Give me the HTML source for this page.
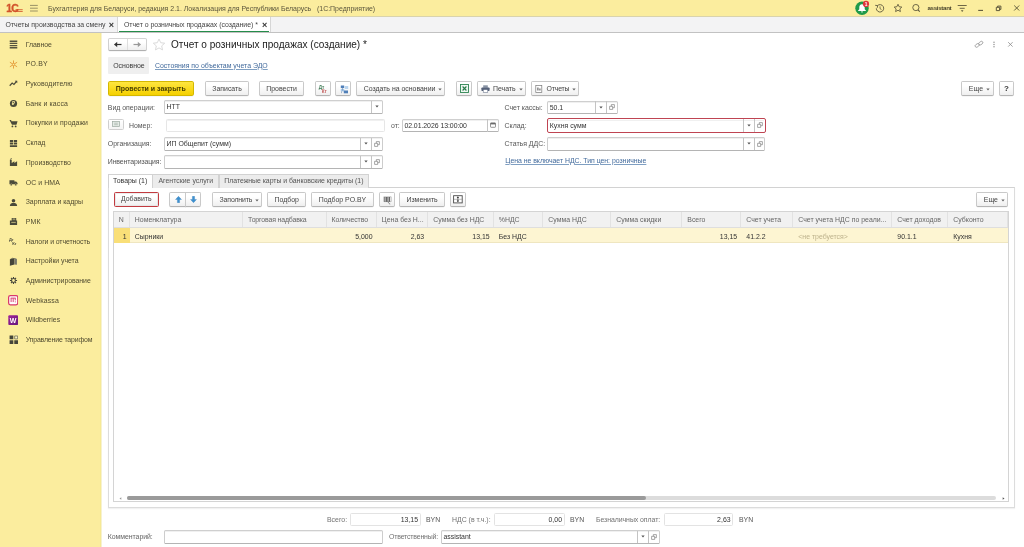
<!DOCTYPE html><html><head><meta charset="utf-8"><title>1C</title><style>
*{box-sizing:border-box;margin:0;padding:0}
html,body{width:1024px;height:547px;overflow:hidden;background:#fff}
body{will-change:transform;font-family:"Liberation Sans",sans-serif;font-size:6.93px;color:#333;position:relative;line-height:1}
.a{position:absolute;white-space:nowrap}
.t{position:absolute;white-space:nowrap;line-height:10px;height:10px;color:#555}
.btn{position:absolute;border:1px solid #c9c9c9;border-bottom-color:#b4b4b4;border-radius:1.800px;background:linear-gradient(#fff 30%,#efefef);box-shadow:0 0.500px 0.500px rgba(0,0,0,.07);text-align:center;color:#444;white-space:nowrap}
.inp{position:absolute;border:1px solid #b9b9b9;border-radius:1px;background:#fff;color:#333;white-space:nowrap;overflow:hidden}
.lnk{position:absolute;color:#426a9c !important;text-decoration:underline;text-decoration-color:#7f9fc2;text-decoration-thickness:0.600px;text-underline-offset:0.500px;white-space:nowrap}
.th{position:absolute;top:0;border-right:1px solid #e2e2e2;color:#666;padding-left:4.800px;overflow:hidden;white-space:nowrap}
.td{position:absolute;top:0;color:#333;padding:0 4.300px 0 4.800px;overflow:hidden;white-space:nowrap}
.r{text-align:right}
</style></head><body>
<div class="a" style="left:0px;top:0px;width:1024px;height:16px;background:#fbed9e"></div>
<svg class="a" style="left:6px;top:3px" width="18" height="10" viewBox="0 0 18 10"><text x="0.300" y="8.800" font-family="Liberation Sans,sans-serif" font-weight="bold" font-size="10.400" fill="#d2542c" stroke="#d2542c" stroke-width="0.350" letter-spacing="-0.800">1С</text><rect x="8.500" y="7.900" width="8.200" height="0.900" fill="#d2542c"/><rect x="9.500" y="6.300" width="7.200" height="0.800" fill="#d2542c"/></svg>
<svg class="a" style="left:29px;top:4px" width="10" height="9" viewBox="0 0 10 9"><g stroke="#9a9266" stroke-width="1"><path d="M1 1.400h7.800M1 4.200h7.800M1 7h7.800"/></g></svg>
<div class="t" style="left:48px;top:3.5px;color:#5a553c;font-size:6.95px">Бухгалтерия для Беларуси, редакция 2.1. Локализация для Республики Беларусь &nbsp;&nbsp;(1С:Предприятие)</div>
<svg class="a" style="left:852px;top:0px" width="20" height="16" viewBox="0 0 20 16"><circle cx="10" cy="8.300" r="6.700" fill="#1f9a4a"/><path d="M10 4.200c-1.900 0-2.700 1.400-2.700 3.100v1.900l-1.200 1.300v0.500h7.800v-0.500l-1.200-1.300v-1.900c0-1.700-0.800-3.100-2.700-3.100z" fill="#fff"/><path d="M9 11.500h2a1 1 0 0 1-2 0z" fill="#fff"/><circle cx="14" cy="3.900" r="3.100" fill="#e0353a"/><text x="14" y="5.700" font-size="4.800" text-anchor="middle" fill="#fff" font-family="Liberation Sans,sans-serif" font-weight="bold">1</text></svg>
<svg class="a" style="left:874px;top:2.800px" width="12" height="11" viewBox="0 0 12 11"><path d="M2.300 5.300a3.700 3.700 0 1 0 1.100-2.600" fill="none" stroke="#5e583c" stroke-width="0.900"/><path d="M1.200 2.300l2.400.3-.3 2.200" fill="none" stroke="#5e583c" stroke-width="0.900"/><path d="M6 3.400v2.200l1.500 1" fill="none" stroke="#5e583c" stroke-width="0.800"/></svg>
<svg class="a" style="left:893px;top:3px" width="10" height="10" viewBox="0 0 12 11"><path d="M6 1l1.400 3 3.200.4-2.400 2.200.7 3.200L6 8.200 3.100 9.800l.7-3.200L1.400 4.400l3.200-.4z" fill="none" stroke="#5e583c" stroke-width="1.050" stroke-linejoin="round"/></svg>
<svg class="a" style="left:911px;top:3.200px" width="11" height="10" viewBox="0 0 12 11"><circle cx="5.300" cy="5" r="3.400" fill="none" stroke="#5e583c" stroke-width="1"/><path d="M7.600 7.600l2 2" stroke="#5e583c" stroke-width="1.200"/></svg>
<div class="t" style="left:927.5px;top:3.4px;letter-spacing:-0.331px;color:#4a452c;font-size:6.200px;font-weight:bold">assistant</div>
<svg class="a" style="left:957px;top:4px" width="10" height="9" viewBox="0 0 10 9"><g stroke="#5e583c" stroke-width="0.900"><path d="M0.700 1.500h9M2.700 4.300h5"/></g><path d="M3.900 6.300h2.600l-1.300 1.600z" fill="#5e583c"/></svg>
<svg class="a" style="left:976px;top:4px" width="10" height="9" viewBox="0 0 10 9"><path d="M2.200 6.400h4.800" stroke="#5e583c" stroke-width="1.100"/></svg>
<svg class="a" style="left:994px;top:4px" width="10" height="9" viewBox="0 0 10 9"><path d="M2.300 3.300h3.300v3.300h-3.300zM3.600 3.300v-1.200h3.300v3.300h-1.300" fill="none" stroke="#5e583c" stroke-width="1"/></svg>
<svg class="a" style="left:1011px;top:4px" width="10" height="9" viewBox="0 0 10 9"><path d="M3.200 1.500l5 5M8.200 1.500l-5 5" stroke="#5e583c" stroke-width="0.950"/></svg>
<div class="a" style="left:0px;top:16px;width:1024px;height:17.3px;background:#f3f3f4;border-top:1px solid #d9d3ad;border-bottom:1px solid #c2c2c2"></div>
<div class="t" style="left:5.5px;top:20.1px;color:#444">Отчеты производства за смену</div>
<div class="t" style="left:108.7px;top:20px;color:#333;font-size:9px;font-weight:bold">×</div>
<div class="a" style="left:117px;top:17px;width:154px;height:15.3px;background:#fff;border-left:1px solid #d6d6d6;border-right:1px solid #d6d6d6"></div>
<div class="a" style="left:119.3px;top:30.8px;width:149.4px;height:1.3px;background:#258c4a"></div>
<div class="t" style="left:124px;top:20.1px;letter-spacing:-0.029px;color:#444">Отчет о розничных продажах (создание) *</div>
<div class="t" style="left:261.9px;top:20px;color:#333;font-size:9px;font-weight:bold">×</div>
<div class="a" style="left:0px;top:33px;width:101px;height:514px;background:#fbed9e"></div>
<div class="a" style="left:100px;top:33px;width:1px;height:514px;background:#f6e996"></div>
<div class="a" style="left:101px;top:33px;width:1px;height:514px;background:#f7f2cf"></div>
<svg class="a" style="left:8.8px;top:40.1px" width="9" height="9" viewBox="0 0 10 10"><path d="M0.800 1.400h8.400M0.800 3.800h8.400M0.800 6.200h8.400M0.800 8.600h8.400" stroke="#55533f" stroke-width="1.500"/></svg>
<div class="t" style="left:25.7px;top:39.7px;letter-spacing:-0.040px;color:#504b30">Главное</div>
<svg class="a" style="left:8.8px;top:59.79px" width="9" height="9" viewBox="0 0 10 10"><g stroke="#e0902a" stroke-width="0.9"><path d="M5 0.500v9M1 2.500l8 5M9 2.500l-8 5"/></g><circle cx="5" cy="5" r="1.300" fill="#fbed9e" stroke="#e0902a" stroke-width="0.700"/></svg>
<div class="t" style="left:25.7px;top:59.39px;letter-spacing:0.203px;color:#504b30">PO.BY</div>
<svg class="a" style="left:8.8px;top:79.48px" width="9" height="9" viewBox="0 0 10 10"><path d="M0.800 7.500l2.700-3 2 1.500 3-3.500" fill="none" stroke="#4a4a3a" stroke-width="1.300"/><path d="M6.500 2h2.700v2.700z" fill="#4a4a3a"/></svg>
<div class="t" style="left:25.7px;top:79.08px;letter-spacing:0.047px;color:#504b30">Руководителю</div>
<svg class="a" style="left:8.8px;top:99.17px" width="9" height="9" viewBox="0 0 10 10"><circle cx="5" cy="5" r="4" fill="#4a4a3a"/><text x="5" y="7.200" font-size="6" font-weight="bold" text-anchor="middle" fill="#fbed9e" font-family="Liberation Sans,sans-serif">₽</text></svg>
<div class="t" style="left:25.7px;top:98.77px;letter-spacing:0.125px;color:#504b30">Банк и касса</div>
<svg class="a" style="left:8.8px;top:118.86px" width="9" height="9" viewBox="0 0 10 10"><path d="M0.500 1h1.800l.5 1.500h6.700l-1.200 4h-5z" fill="#4a4a3a"/><circle cx="3.800" cy="8.300" r="1" fill="#4a4a3a"/><circle cx="7.400" cy="8.300" r="1" fill="#4a4a3a"/></svg>
<div class="t" style="left:25.7px;top:118.46px;letter-spacing:0.053px;color:#504b30">Покупки и продажи</div>
<svg class="a" style="left:8.8px;top:138.55px" width="9" height="9" viewBox="0 0 10 10"><path d="M1 1h3.600v2.200h-3.600zM5.400 1h3.600v2.200h-3.600zM1 4h3.600v2.200h-3.600zM5.400 4h3.600v2.200h-3.600zM1 7h8v2h-8z" fill="#4a4a3a"/></svg>
<div class="t" style="left:25.7px;top:138.15px;letter-spacing:-0.111px;color:#504b30">Склад</div>
<svg class="a" style="left:8.8px;top:158.24px" width="9" height="9" viewBox="0 0 10 10"><path d="M1 9v-7h2v3.500l3-2v2l3-2v5.500z" fill="#4a4a3a"/><path d="M1.200 1.500l2-1" stroke="#4a4a3a" stroke-width="0.800"/></svg>
<div class="t" style="left:25.7px;top:157.84px;letter-spacing:0.010px;color:#504b30">Производство</div>
<svg class="a" style="left:8.8px;top:177.93px" width="9" height="9" viewBox="0 0 10 10"><path d="M0.500 2.500h5.500v4.500h-5.500zM6 4h2l1.500 1.500v1.500h-3.500z" fill="#4a4a3a"/><circle cx="2.500" cy="7.500" r="1.100" fill="#4a4a3a" stroke="#fbed9e" stroke-width="0.400"/><circle cx="7.500" cy="7.500" r="1.100" fill="#4a4a3a" stroke="#fbed9e" stroke-width="0.400"/></svg>
<div class="t" style="left:25.7px;top:177.53px;letter-spacing:0.085px;color:#504b30">ОС и НМА</div>
<svg class="a" style="left:8.8px;top:197.62px" width="9" height="9" viewBox="0 0 10 10"><circle cx="5" cy="3" r="2" fill="#4a4a3a"/><path d="M1 9c0-3 2-3.500 4-3.500s4 .5 4 3.500z" fill="#4a4a3a"/></svg>
<div class="t" style="left:25.7px;top:197.22px;letter-spacing:-0.043px;color:#504b30">Зарплата и кадры</div>
<svg class="a" style="left:8.8px;top:217.31px" width="9" height="9" viewBox="0 0 10 10"><path d="M1 4h8v5h-8zM3 1h5v3h-5z" fill="#4a4a3a"/><path d="M4 2h3M4 3h3" stroke="#fbed9e" stroke-width="0.500"/><path d="M2.500 6h5" stroke="#fbed9e" stroke-width="0.700"/></svg>
<div class="t" style="left:25.7px;top:216.91px;letter-spacing:0.249px;color:#504b30">РМК</div>
<svg class="a" style="left:8.8px;top:237px" width="9" height="9" viewBox="0 0 10 10"><text x="0" y="4.500" font-size="4.500" font-weight="bold" fill="#4a4a3a" font-family="Liberation Sans,sans-serif">Дт</text><text x="3.500" y="9" font-size="4.500" font-weight="bold" fill="#4a4a3a" font-family="Liberation Sans,sans-serif">Кт</text></svg>
<div class="t" style="left:25.7px;top:236.6px;letter-spacing:-0.093px;color:#504b30">Налоги и отчетность</div>
<svg class="a" style="left:8.8px;top:256.69px" width="9" height="9" viewBox="0 0 10 10"><path d="M1 2.600l5-1.400v7.200l-5 1.300z" fill="#45453a"/><path d="M6 1.200l2.800 0.900v6.600l-2.800-0.300z" fill="#77776a"/><path d="M1 2.600l2.800-1.800 5 1.300-2.800-0.900z" fill="#5e5e50"/></svg>
<div class="t" style="left:25.7px;top:256.29px;letter-spacing:-0.050px;color:#504b30">Настройки учета</div>
<svg class="a" style="left:8.8px;top:276.38px" width="9" height="9" viewBox="0 0 10 10"><g transform="translate(5 5) scale(0.94) translate(-5 -5)"><circle cx="5" cy="5" r="2.300" fill="none" stroke="#45453a" stroke-width="1.300"/><g stroke="#45453a" stroke-width="1.300"><path d="M5 0.800v1.600M5 7.600v1.600M0.800 5h1.600M7.600 5h1.600M2 2l1.200 1.200M6.800 6.800l1.200 1.200M8 2l-1.200 1.200M3.200 6.800l-1.200 1.200"/></g></g></svg>
<div class="t" style="left:25.7px;top:275.98px;letter-spacing:-0.058px;color:#504b30">Администрирование</div>
<svg class="a" style="left:8.1px;top:295.37px" width="10.4" height="10.4" viewBox="0 0 10 10"><rect x="0.600" y="0.600" width="8.800" height="8.800" rx="1.600" fill="#fff" stroke="#d8396b" stroke-width="1.200"/><path d="M2.600 3h4.800" stroke="#d8396b" stroke-width="0.900"/><path d="M3 3v3.800M5 3v3.800M7 3v2.200" stroke="#d8396b" stroke-width="0.900"/><circle cx="7" cy="6.600" r="0.500" fill="#d8396b"/></svg>
<div class="t" style="left:25.7px;top:295.67px;letter-spacing:0.122px;color:#504b30">Webkassa</div>
<svg class="a" style="left:8.1px;top:315.06px" width="10.4" height="10.4" viewBox="0 0 10 10"><defs><linearGradient id="wbg" x1="0" y1="0" x2="1" y2="1"><stop offset="0" stop-color="#a0219a"/><stop offset="1" stop-color="#64187c"/></linearGradient></defs><rect x="0.300" y="0.300" width="9.400" height="9.400" rx="1" fill="url(#wbg)"/><text x="5" y="7.500" font-size="6.800" font-weight="bold" text-anchor="middle" fill="#fff" font-family="Liberation Sans,sans-serif">W</text></svg>
<div class="t" style="left:25.7px;top:315.36px;letter-spacing:-0.014px;color:#504b30">Wildberries</div>
<svg class="a" style="left:8.5px;top:335.15px" width="9.6" height="9.6" viewBox="0 0 10 10"><path d="M0.600 0.600h3.900v3.900h-3.900zM5.500 5.500h3.900v3.900h-3.900zM0.600 5.500h3.900v3.900h-3.900z" fill="#45453a"/><path d="M5.900 1h3.100v3.100h-3.100z" fill="#fbf3c4" stroke="#6a6a58" stroke-width="0.800"/></svg>
<div class="t" style="left:25.7px;top:335.05px;letter-spacing:-0.153px;color:#504b30">Управление тарифом</div>
<div class="btn" style="left:108px;top:38px;width:39px;height:13px;border-color:#d4d4d4 #d0d0d0 #b0b0b0 #d0d0d0"></div>
<div class="a" style="left:127px;top:39px;width:1px;height:11px;background:#dedede"></div>
<svg class="a" style="left:113px;top:41px" width="10" height="7" viewBox="0 0 10 7"><path d="M1.500 3.500h7" stroke="#333" stroke-width="1.200"/><path d="M4.200 0.800l-3 2.700 3 2.700z" fill="#333"/></svg>
<svg class="a" style="left:132px;top:41px" width="10" height="7" viewBox="0 0 10 7"><path d="M1.500 3.500h7" stroke="#999" stroke-width="1.200"/><path d="M5.800 0.800l3 2.700-3 2.700z" fill="#999"/></svg>
<svg class="a" style="left:152px;top:38px" width="14" height="13" viewBox="0 0 14 13"><path d="M7 1l1.700 3.700 4 .5-3 2.700.8 4L7 9.900 3.500 11.900l.8-4-3-2.700 4-.5z" fill="none" stroke="#d6d6d6" stroke-width="0.9" stroke-linejoin="round"/></svg>
<div class="t" style="left:171px;top:40px;color:#222;font-size:10.05px;line-height:12px;height:12px;margin-top:-1px">Отчет о розничных продажах (создание) *</div>
<svg class="a" style="left:973.500px;top:39.500px" width="10" height="9" viewBox="0 0 11 10"><g fill="none" stroke="#999" stroke-width="0.900"><rect x="1" y="4.500" width="5" height="3" rx="1.500" transform="rotate(-35 3.500 6)"/><rect x="5" y="2" width="5" height="3" rx="1.500" transform="rotate(-35 7.500 3.500)"/></g></svg>
<svg class="a" style="left:992.200px;top:40.500px" width="4" height="7" viewBox="0 0 4 7"><g fill="#8a8a8a"><circle cx="2" cy="1.200" r="0.700"/><circle cx="2" cy="3.500" r="0.700"/><circle cx="2" cy="5.800" r="0.700"/></g></svg>
<svg class="a" style="left:1007px;top:40.500px" width="7" height="7" viewBox="0 0 7 7"><path d="M1.200 1.200l4.400 4.400M5.600 1.200l-4.400 4.400" stroke="#8a8a8a" stroke-width="0.800"/></svg>
<div class="a" style="left:108px;top:57.2px;width:40.8px;height:16.6px;background:#efefef;border-radius:1px"></div>
<div class="t" style="left:113.2px;top:60.7px;letter-spacing:-0.032px;color:#3a3a3a">Основное</div>
<div class="lnk t" style="left:155px;top:60.5px;font-size:6.93px">Состояния по объектам учета ЭДО</div>
<div class="btn" style="left:108px;top:81.2px;width:85.5px;height:14.8px;line-height:14.2px;background:linear-gradient(#ffe640,#f5d000);border-color:#d4b800;color:#4a4000;font-size:7px"><b>Провести и закрыть</b></div>
<div class="btn" style="left:204.8px;top:81.2px;width:44.5px;height:14.8px;line-height:14.2px;">Записать</div>
<div class="btn" style="left:259.3px;top:81.2px;width:44.6px;height:14.8px;line-height:14.2px;">Провести</div>
<div class="btn" style="left:315px;top:81.2px;width:15.8px;height:14.8px;line-height:14.2px;"><span style="font-size:4.600px;font-weight:bold;position:absolute;left:2.800px;top:2.400px;color:#3f7a55;line-height:5px">Дт</span><span style="font-size:4.600px;font-weight:bold;position:absolute;left:5.800px;top:6.800px;color:#c35c5c;line-height:5px">Кт</span></div>
<div class="btn" style="left:335.1px;top:81.2px;width:16.2px;height:14.8px;line-height:14.2px;"><svg style="position:absolute;left:3.500px;top:2.500px" width="9" height="9" viewBox="0 0 9 9"><rect x="0.800" y="0.500" width="3.400" height="2.600" fill="#4f7fb8"/><rect x="4.800" y="1" width="3.400" height="3" fill="#b9d4ee"/><rect x="0.800" y="4" width="3.400" height="2.400" fill="#a6c8e8"/><rect x="3.800" y="5.500" width="4.200" height="2.800" fill="#4f7fb8"/><path d="M2.500 3v2.500M1.500 6.400v1.800" stroke="#6c8cb0" stroke-width="0.600"/></svg></div>
<div class="btn" style="left:355.8px;top:81.2px;width:89.6px;height:14.8px;line-height:14.2px;text-align:left"><span style="position:absolute;left:6.95px;top:0;letter-spacing:-0.010px">Создать на основании</span><svg style="position:absolute;left:81.4px;top:5.9px" width="4" height="3" viewBox="0 0 4 3"><path d="M0.300 0.400h3.400l-1.700 2.200z" fill="#666"/></svg></div>
<div class="btn" style="left:456.4px;top:81.2px;width:15.4px;height:14.8px;line-height:14.2px;"><svg style="position:absolute;left:2.500px;top:2px" width="9" height="9" viewBox="0 0 9 9"><rect x="0.500" y="0.500" width="8" height="8" fill="#eef7f1" stroke="#2e8552" stroke-width="0.900"/><path d="M2.600 2.500l3.800 4M6.400 2.500l-3.800 4" stroke="#2a7a4a" stroke-width="1.100"/></svg></div>
<div class="btn" style="left:477px;top:81.2px;width:48.5px;height:14.8px;line-height:14.2px;text-align:left"><svg style="position:absolute;left:3px;top:2.800px" width="9" height="8" viewBox="0 0 9 8"><rect x="2.200" y="0.300" width="4.600" height="2.500" fill="#8a95a5"/><rect x="0.400" y="2.400" width="8.200" height="3.600" rx="0.800" fill="#56627a"/><rect x="2.200" y="4.600" width="4.600" height="3" fill="#fff" stroke="#56627a" stroke-width="0.500"/></svg><span style="position:absolute;left:15.1px;top:0;letter-spacing:-0.050px">Печать</span><svg style="position:absolute;left:40.5px;top:5.9px" width="4" height="3" viewBox="0 0 4 3"><path d="M0.300 0.400h3.400l-1.700 2.200z" fill="#666"/></svg></div>
<div class="btn" style="left:530.6px;top:81.2px;width:48.8px;height:14.8px;line-height:14.2px;text-align:left"><svg style="position:absolute;left:3.700px;top:2.800px" width="8" height="8" viewBox="0 0 8 8"><rect x="0.800" y="0.500" width="6" height="7" fill="#fff" stroke="#777" stroke-width="0.700"/><path d="M2.300 2.500h1.200v3h-1.200zM4.300 3.500h1.200v2h-1.200z" fill="#666"/></svg><span style="position:absolute;left:15px;top:0;letter-spacing:-0.192px">Отчеты</span><svg style="position:absolute;left:40.3px;top:5.9px" width="4" height="3" viewBox="0 0 4 3"><path d="M0.300 0.400h3.400l-1.700 2.200z" fill="#666"/></svg></div>
<div class="btn" style="left:961.2px;top:81.2px;width:32.4px;height:14.8px;line-height:14.2px;text-align:left"><span style="position:absolute;left:6.6px;top:0;letter-spacing:0.100px">Еще</span><svg style="position:absolute;left:23.9px;top:5.9px" width="4" height="3" viewBox="0 0 4 3"><path d="M0.300 0.400h3.400l-1.700 2.200z" fill="#666"/></svg></div>
<div class="btn" style="left:998.5px;top:81.2px;width:15.8px;height:14.8px;line-height:14.2px;"><b style="font-size:8px;color:#333">?</b></div>
<div class="t" style="left:107.8px;top:102.7px;">Вид операции:</div>
<div class="a" style="left:164.2px;top:100.4px;width:218.6px;height:13.3px;border:1px solid #c4c4c4;border-color:#cfcfcf #cdcdcd #b4b4b4 #cdcdcd;border-radius:1.500px;background:#fff;box-shadow:inset 0 1px 0 #f0f0f0;"></div>
<div class="a" style="left:371.1px;top:100.9px;width:1px;height:12.3px;background:#c4c4c4"></div>
<svg class="a" style="left:375px;top:105.25px" width="4" height="3" viewBox="0 0 4 3"><path d="M0.300 0.400h3.400l-1.700 2.200z" fill="#555"/></svg>
<div class="t" style="left:166.6px;top:102.15px;color:#333;">НТТ</div>
<div class="t" style="left:504.6px;top:102.9px;">Счет кассы:</div>
<div class="a" style="left:547.3px;top:100.9px;width:70.5px;height:13px;border:1px solid #c4c4c4;border-color:#cfcfcf #cdcdcd #b4b4b4 #cdcdcd;border-radius:1.500px;background:#fff;box-shadow:inset 0 1px 0 #f0f0f0;"></div>
<div class="a" style="left:594.5px;top:101.4px;width:1px;height:12px;background:#c4c4c4"></div>
<div class="a" style="left:606.2px;top:101.4px;width:1px;height:12px;background:#c4c4c4"></div>
<svg class="a" style="left:598.65px;top:105.6px" width="4" height="3" viewBox="0 0 4 3"><path d="M0.300 0.400h3.400l-1.700 2.200z" fill="#555"/></svg>
<svg class="a" style="left:609.25px;top:104.2px" width="6" height="6" viewBox="0 0 7 7"><path d="M2.700 0.700h3.600v3.600h-3.600z" fill="none" stroke="#777" stroke-width="0.750"/><path d="M0.700 2.700h3.600v3.600h-3.600z" fill="#fff" stroke="#777" stroke-width="0.750"/></svg>
<div class="t" style="left:549.7px;top:102.5px;color:#333;">50.1</div>
<div class="a" style="left:107.800px;top:119px;width:16px;height:11px;border:1px solid #cfcfcf;border-radius:1.500px;background:linear-gradient(#fff,#f4f4f4)"></div>
<svg class="a" style="left:111.500px;top:121.300px" width="8" height="6" viewBox="0 0 8 6"><rect x="0.500" y="0.500" width="7" height="5" fill="#e4ebe6" stroke="#9aa8a0" stroke-width="0.700"/><path d="M2.200 2.200h3.600M2.200 3.700h3.600" stroke="#9aa8a0" stroke-width="0.600"/></svg>
<div class="t" style="left:129px;top:120.5px;">Номер:</div>
<div class="a" style="left:166px;top:119.1px;width:219.2px;height:12.9px;border:1px solid #e6e6e6;border-radius:1.500px;background:#fff;box-shadow:inset 0 1px 0 #f0f0f0;"></div>
<div class="t" style="left:391px;top:120.5px;">от:</div>
<div class="a" style="left:402px;top:118.8px;width:97px;height:13.4px;border:1px solid #c4c4c4;border-color:#cfcfcf #cdcdcd #b4b4b4 #cdcdcd;border-radius:1.500px;background:#fff;box-shadow:inset 0 1px 0 #f0f0f0;"></div>
<div class="a" style="left:486.7px;top:119.3px;width:1px;height:12.4px;background:#c4c4c4"></div>
<svg class="a" style="left:490.3px;top:121.9px" width="6" height="6" viewBox="0 0 6 6"><rect x="0.500" y="1" width="5" height="4.300" rx="0.600" fill="#fff" stroke="#6a6a6a" stroke-width="0.700"/><rect x="0.500" y="0.800" width="5" height="1.600" fill="#6a6a6a"/></svg>
<div class="t" style="left:404.4px;top:120.6px;color:#333;letter-spacing:-0.052px">02.01.2026 13:00:00</div>
<div class="t" style="left:504.6px;top:120.5px;">Склад:</div>
<div class="a" style="left:547.3px;top:118.5px;width:218.2px;height:14px;border:1px solid #c4c4c4;border-color:#cfcfcf #cdcdcd #b4b4b4 #cdcdcd;border-radius:1.500px;background:#fff;box-shadow:inset 0 1px 0 #f0f0f0;border-color:#fff"></div>
<div class="a" style="left:742.8px;top:119px;width:1px;height:13px;background:#c4c4c4"></div>
<div class="a" style="left:754px;top:119px;width:1px;height:13px;background:#c4c4c4"></div>
<svg class="a" style="left:746.7px;top:123.7px" width="4" height="3" viewBox="0 0 4 3"><path d="M0.300 0.400h3.400l-1.700 2.200z" fill="#555"/></svg>
<svg class="a" style="left:757px;top:122.3px" width="6" height="6" viewBox="0 0 7 7"><path d="M2.700 0.700h3.600v3.600h-3.600z" fill="none" stroke="#777" stroke-width="0.750"/><path d="M0.700 2.700h3.600v3.600h-3.600z" fill="#fff" stroke="#777" stroke-width="0.750"/></svg>
<div class="t" style="left:549.7px;top:120.6px;color:#333;">Кухня сумм</div>
<div class="a" style="left:546.7px;top:118px;width:219.2px;height:14.7px;border:1.400px solid #bf4452;border-radius:2px"></div>
<div class="t" style="left:107.8px;top:138.8px;">Организация:</div>
<div class="a" style="left:164.2px;top:137px;width:218.6px;height:13.5px;border:1px solid #c4c4c4;border-color:#cfcfcf #cdcdcd #b4b4b4 #cdcdcd;border-radius:1.500px;background:#fff;box-shadow:inset 0 1px 0 #f0f0f0;"></div>
<div class="a" style="left:360px;top:137.5px;width:1px;height:12.5px;background:#c4c4c4"></div>
<div class="a" style="left:371.1px;top:137.5px;width:1px;height:12.5px;background:#c4c4c4"></div>
<svg class="a" style="left:363.85px;top:141.95px" width="4" height="3" viewBox="0 0 4 3"><path d="M0.300 0.400h3.400l-1.700 2.200z" fill="#555"/></svg>
<svg class="a" style="left:374.2px;top:140.55px" width="6" height="6" viewBox="0 0 7 7"><path d="M2.700 0.700h3.600v3.600h-3.600z" fill="none" stroke="#777" stroke-width="0.750"/><path d="M0.700 2.700h3.600v3.600h-3.600z" fill="#fff" stroke="#777" stroke-width="0.750"/></svg>
<div class="t" style="left:166.6px;top:138.85px;color:#333;">ИП Общепит (сумм)</div>
<div class="t" style="left:504.6px;top:138.8px;">Статья ДДС:</div>
<div class="a" style="left:547.3px;top:137px;width:218.2px;height:13.5px;border:1px solid #c4c4c4;border-color:#cfcfcf #cdcdcd #b4b4b4 #cdcdcd;border-radius:1.500px;background:#fff;box-shadow:inset 0 1px 0 #f0f0f0;"></div>
<div class="a" style="left:742.8px;top:137.5px;width:1px;height:12.5px;background:#c4c4c4"></div>
<div class="a" style="left:754px;top:137.5px;width:1px;height:12.5px;background:#c4c4c4"></div>
<svg class="a" style="left:746.7px;top:141.95px" width="4" height="3" viewBox="0 0 4 3"><path d="M0.300 0.400h3.400l-1.700 2.200z" fill="#555"/></svg>
<svg class="a" style="left:757px;top:140.55px" width="6" height="6" viewBox="0 0 7 7"><path d="M2.700 0.700h3.600v3.600h-3.600z" fill="none" stroke="#777" stroke-width="0.750"/><path d="M0.700 2.700h3.600v3.600h-3.600z" fill="#fff" stroke="#777" stroke-width="0.750"/></svg>
<div class="t" style="left:107.8px;top:157px;letter-spacing:-0.120px">Инвентаризация:</div>
<div class="a" style="left:164.2px;top:155.2px;width:218.6px;height:13.5px;border:1px solid #c4c4c4;border-color:#cfcfcf #cdcdcd #b4b4b4 #cdcdcd;border-radius:1.500px;background:#fff;box-shadow:inset 0 1px 0 #f0f0f0;"></div>
<div class="a" style="left:360px;top:155.7px;width:1px;height:12.5px;background:#c4c4c4"></div>
<div class="a" style="left:371.1px;top:155.7px;width:1px;height:12.5px;background:#c4c4c4"></div>
<svg class="a" style="left:363.85px;top:160.15px" width="4" height="3" viewBox="0 0 4 3"><path d="M0.300 0.400h3.400l-1.700 2.200z" fill="#555"/></svg>
<svg class="a" style="left:374.2px;top:158.75px" width="6" height="6" viewBox="0 0 7 7"><path d="M2.700 0.700h3.600v3.600h-3.600z" fill="none" stroke="#777" stroke-width="0.750"/><path d="M0.700 2.700h3.600v3.600h-3.600z" fill="#fff" stroke="#777" stroke-width="0.750"/></svg>
<div class="lnk t" style="left:505.3px;top:155.7px;letter-spacing:-0.032px;">Цена не включает НДС. Тип цен: розничные</div>
<div class="a" style="left:107.5px;top:187px;width:907.4px;height:320.8px;border:1px solid #dcdcdc;border-top-color:#d2d2d2;background:#fff;box-shadow:0 1px 1px rgba(0,0,0,.05)"></div>
<div class="a" style="left:152.3px;top:173.5px;width:67px;height:14px;background:#ececec;border:1px solid #d2d2d2;border-bottom:none;border-left:none"></div>
<div class="a" style="left:218.8px;top:173.5px;width:150px;height:14px;background:#ececec;border:1px solid #d2d2d2;border-bottom:none"></div>
<div class="a" style="left:107.5px;top:173.5px;width:45.3px;height:14.6px;background:#fff;border:1px solid #d2d2d2;border-bottom:none"></div>
<div class="t" style="left:113px;top:175.8px;color:#333">Товары (1)</div>
<div class="t" style="left:158.5px;top:175.8px;">Агентские услуги</div>
<div class="t" style="left:224.3px;top:175.8px;letter-spacing:-0.035px;">Платежные карты и банковские кредиты (1)</div>
<div class="btn" style="left:113.500px;top:192.4px;width:45.600px;height:14.7px;line-height:12.9px;border:1.300px solid #c23b40;border-radius:1.500px;box-shadow:inset 0 0 0 0.600px #ddd">Добавить</div>
<div class="btn" style="left:169px;top:192.1px;width:17px;height:15px;line-height:14.4px;border-radius:2px 0 0 2px"><svg style="position:absolute;left:4.500px;top:3.200px" width="7" height="7" viewBox="0 0 7 7"><path d="M3.500 0.300l3 3.200h-1.900v3.200h-2.200v-3.200h-1.900z" fill="#3c90cf" stroke="#2f78b4" stroke-width="0.300"/></svg></div>
<div class="btn" style="left:185px;top:192.1px;width:16px;height:15px;line-height:14.4px;border-radius:0 2px 2px 0"><svg style="position:absolute;left:4px;top:3.200px" width="7" height="7" viewBox="0 0 7 7"><path d="M3.500 6.700l3-3.200h-1.900v-3.200h-2.200v3.200h-1.900z" fill="#3c90cf" stroke="#2f78b4" stroke-width="0.300"/></svg></div>
<div class="btn" style="left:211.8px;top:192.1px;width:50.5px;height:15px;line-height:14.4px;text-align:left"><span style="position:absolute;left:6.7px;top:0;letter-spacing:-0.125px">Заполнить</span><svg style="position:absolute;left:42.2px;top:6px" width="4" height="3" viewBox="0 0 4 3"><path d="M0.300 0.400h3.400l-1.700 2.200z" fill="#666"/></svg></div>
<div class="btn" style="left:267.2px;top:192.1px;width:39px;height:15px;line-height:14.4px;">Подбор</div>
<div class="btn" style="left:311.3px;top:192.1px;width:62.4px;height:15px;line-height:14.4px;">Подбор PO.BY</div>
<div class="btn" style="left:379px;top:192.1px;width:15.8px;height:15px;line-height:14.4px;"><svg style="position:absolute;left:3px;top:2.600px" width="9" height="9" viewBox="0 0 9 9"><path d="M0.800 0.800h7.400v4.800h-7.400z" fill="#f4f4f4" stroke="#8a8a8a" stroke-width="0.500"/><path d="M1.900 1v4.800M3.400 1v4.800M4.900 1v4.800M6.400 1v4.800" stroke="#444" stroke-width="0.900"/><path d="M5.200 5.800c0.300 1.500 1 2 2 2.200" fill="none" stroke="#555" stroke-width="0.700"/></svg></div>
<div class="btn" style="left:399.4px;top:192.1px;width:45.4px;height:15px;line-height:14.4px;">Изменить</div>
<div class="btn" style="left:450px;top:192.1px;width:16px;height:15px;line-height:14.4px;"><svg style="position:absolute;left:2.200px;top:2.400px" width="10" height="9" viewBox="0 0 10 9"><rect x="0.600" y="0.700" width="8.600" height="7.200" fill="#fff" stroke="#4a4a4a" stroke-width="0.900"/><path d="M1 4.300h7.800" stroke="#777" stroke-width="0.500"/><path d="M4.900 1.600v5.400" stroke="#333" stroke-width="0.700"/><path d="M3.700 3.100l1.200-1.500 1.200 1.500zM3.700 5.500l1.200 1.500 1.200-1.500z" fill="#333"/></svg></div>
<div class="btn" style="left:975.7px;top:192.1px;width:32.5px;height:15px;line-height:14.4px;text-align:left"><span style="position:absolute;left:7px;top:0;letter-spacing:0.100px">Еще</span><svg style="position:absolute;left:24.5px;top:6px" width="4" height="3" viewBox="0 0 4 3"><path d="M0.300 0.400h3.400l-1.700 2.200z" fill="#666"/></svg></div>
<div class="a" style="left:113.3px;top:211.3px;width:895.7px;height:290.3px;border:1px solid #d4d4d4;background:#fff"></div>
<div class="a" style="left:114.3px;top:212px;width:893.7px;height:16px;background:#f1f1f1;border-bottom:1px solid #dedede">
<div class="th" style="left:0px;width:15.7px;height:15px;line-height:15.4px;padding-left:4.500px;">N</div>
<div class="th" style="left:15.7px;width:113.3px;height:15px;line-height:15.4px;">Номенклатура</div>
<div class="th" style="left:129px;width:83.5px;height:15px;line-height:15.4px;letter-spacing:-0.146px;">Торговая надбавка</div>
<div class="th" style="left:212.5px;width:50px;height:15px;line-height:15.4px;letter-spacing:-0.082px;">Количество</div>
<div class="th" style="left:262.5px;width:51.7px;height:15px;line-height:15.4px;">Цена без Н...</div>
<div class="th" style="left:314.2px;width:65.5px;height:15px;line-height:15.4px;">Сумма без НДС</div>
<div class="th" style="left:379.7px;width:49.5px;height:15px;line-height:15.4px;">%НДС</div>
<div class="th" style="left:429.2px;width:68px;height:15px;line-height:15.4px;">Сумма НДС</div>
<div class="th" style="left:497.2px;width:71px;height:15px;line-height:15.4px;">Сумма скидки</div>
<div class="th" style="left:568.2px;width:59px;height:15px;line-height:15.4px;">Всего</div>
<div class="th" style="left:627.2px;width:52px;height:15px;line-height:15.4px;">Счет учета</div>
<div class="th" style="left:679.2px;width:99px;height:15px;line-height:15.4px;">Счет учета НДС по реали...</div>
<div class="th" style="left:778.2px;width:56px;height:15px;line-height:15.4px;">Счет доходов</div>
<div class="th" style="left:834.2px;width:59.5px;height:15px;line-height:15.4px;">Субконто</div>
</div>
<div class="a" style="left:114.3px;top:228px;width:893.7px;height:15px;background:#fdf5d2;border-bottom:1px solid #efe6c0">
<div class="td r" style="left:0px;width:15.7px;height:15px;line-height:17.2px;background:#f9df78;padding:0 3.300px 0 0;">1</div>
<div class="td" style="left:15.7px;width:113.3px;height:15px;line-height:17.2px;">Сырники</div>
<div class="td" style="left:129px;width:83.5px;height:15px;line-height:17.2px;"></div>
<div class="td r" style="left:212.5px;width:50px;height:15px;line-height:17.2px;">5,000</div>
<div class="td r" style="left:262.5px;width:51.7px;height:15px;line-height:17.2px;">2,63</div>
<div class="td r" style="left:314.2px;width:65.5px;height:15px;line-height:17.2px;">13,15</div>
<div class="td" style="left:379.7px;width:49.5px;height:15px;line-height:17.2px;">Без НДС</div>
<div class="td" style="left:429.2px;width:68px;height:15px;line-height:17.2px;"></div>
<div class="td" style="left:497.2px;width:71px;height:15px;line-height:17.2px;"></div>
<div class="td r" style="left:568.2px;width:59px;height:15px;line-height:17.2px;">13,15</div>
<div class="td" style="left:627.2px;width:52px;height:15px;line-height:17.2px;">41.2.2</div>
<div class="td" style="left:679.2px;width:99px;height:15px;line-height:17.2px;"><span style="color:#bdb28c">&lt;не требуется&gt;</span></div>
<div class="td" style="left:778.2px;width:56px;height:15px;line-height:17.2px;">90.1.1</div>
<div class="td" style="left:834.2px;width:59.5px;height:15px;line-height:17.2px;">Кухня</div>
</div>
<div class="a" style="left:126.5px;top:496px;width:869px;height:3.8px;background:#dcdcdc;border-radius:1.900px"></div>
<div class="a" style="left:126.5px;top:496px;width:519.5px;height:3.8px;background:#9a9a9a;border-radius:1.900px"></div>
<svg class="a" style="left:118.500px;top:496.500px" width="3" height="3" viewBox="0 0 3 3"><path d="M2.300 0.300v2.400l-1.800-1.200z" fill="#999"/></svg>
<svg class="a" style="left:1002px;top:496.500px" width="3" height="3" viewBox="0 0 3 3"><path d="M0.700 0.300v2.400l1.800-1.200z" fill="#555"/></svg>
<div class="t" style="left:327px;top:514.7px;color:#727272">Всего:</div>
<div class="a" style="left:349.8px;top:512.600px;width:70.8px;height:13px;border:1px solid #e3e3e3;border-radius:1.500px;background:#fff"></div>
<div class="t" style="left:349.8px;top:514.600px;width:68.2px;text-align:right;color:#333">13,15</div>
<div class="t" style="left:426px;top:514.7px;color:#555">BYN</div>
<div class="t" style="left:452px;top:514.7px;color:#727272">НДС (в т.ч.):</div>
<div class="a" style="left:494px;top:512.600px;width:70.6px;height:13px;border:1px solid #e3e3e3;border-radius:1.500px;background:#fff"></div>
<div class="t" style="left:494px;top:514.600px;width:68px;text-align:right;color:#333">0,00</div>
<div class="t" style="left:570px;top:514.7px;color:#555">BYN</div>
<div class="t" style="left:596px;top:514.7px;letter-spacing:-0.060px;color:#727272">Безналичных оплат:</div>
<div class="a" style="left:663.6px;top:512.600px;width:69.6px;height:13px;border:1px solid #e3e3e3;border-radius:1.500px;background:#fff"></div>
<div class="t" style="left:663.6px;top:514.600px;width:67px;text-align:right;color:#333">2,63</div>
<div class="t" style="left:739px;top:514.7px;color:#555">BYN</div>
<div class="t" style="left:107.8px;top:532.1px;letter-spacing:-0.048px;color:#666">Комментарий:</div>
<div class="a" style="left:164.2px;top:530.2px;width:219.3px;height:13.5px;border:1px solid #c4c4c4;border-color:#cfcfcf #cdcdcd #b4b4b4 #cdcdcd;border-radius:1.500px;background:#fff;box-shadow:inset 0 1px 0 #f0f0f0;"></div>
<div class="t" style="left:389px;top:532.1px;letter-spacing:-0.173px;color:#727272">Ответственный:</div>
<div class="a" style="left:441px;top:530.2px;width:219px;height:13.5px;border:1px solid #c4c4c4;border-color:#cfcfcf #cdcdcd #b4b4b4 #cdcdcd;border-radius:1.500px;background:#fff;box-shadow:inset 0 1px 0 #f0f0f0;"></div>
<div class="a" style="left:637px;top:530.7px;width:1px;height:12.5px;background:#c4c4c4"></div>
<div class="a" style="left:648px;top:530.7px;width:1px;height:12.5px;background:#c4c4c4"></div>
<svg class="a" style="left:640.8px;top:535.15px" width="4" height="3" viewBox="0 0 4 3"><path d="M0.300 0.400h3.400l-1.700 2.200z" fill="#555"/></svg>
<svg class="a" style="left:651.25px;top:533.75px" width="6" height="6" viewBox="0 0 7 7"><path d="M2.700 0.700h3.600v3.600h-3.600z" fill="none" stroke="#777" stroke-width="0.750"/><path d="M0.700 2.700h3.600v3.600h-3.600z" fill="#fff" stroke="#777" stroke-width="0.750"/></svg>
<div class="t" style="left:443.4px;top:532.05px;color:#333;">assistant</div>
</body></html>
